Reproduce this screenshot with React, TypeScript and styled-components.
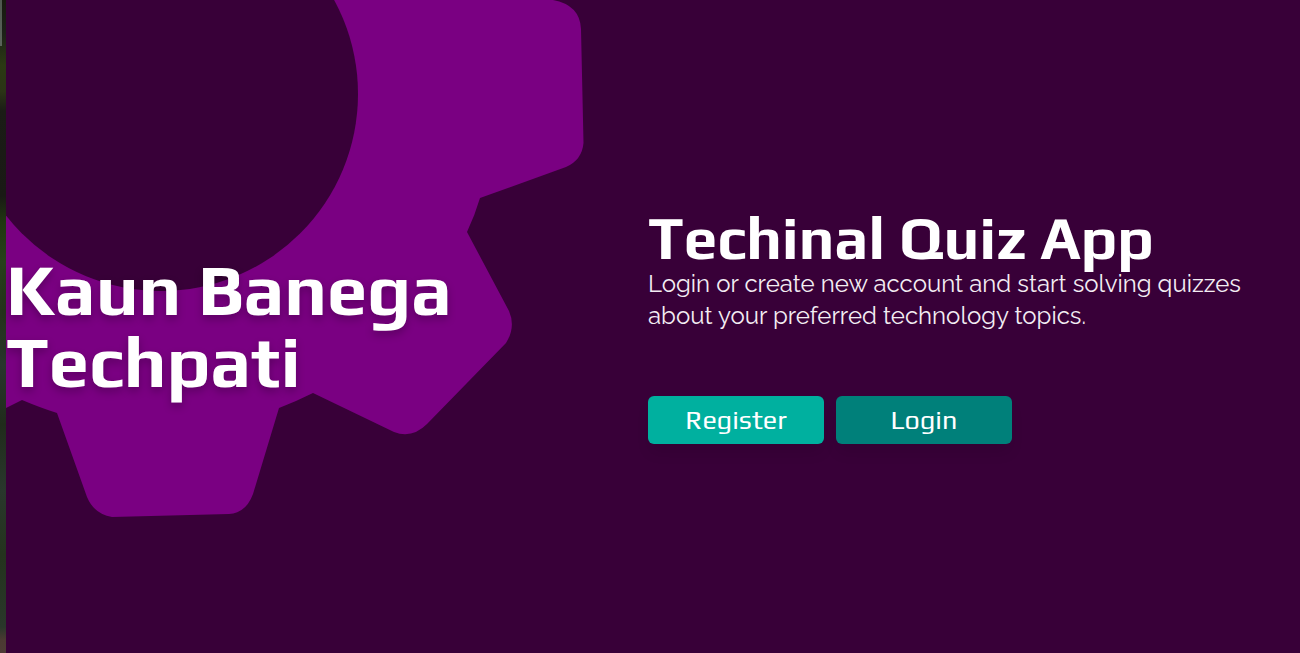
import React from "react";
import styled, { createGlobalStyle } from "styled-components";

const GlobalStyle = createGlobalStyle`
  *, *::before, *::after { box-sizing: border-box; }
  body { margin: 0; background: #380038; }
`;

const headingFont = `Play, Inter, "Liberation Sans", sans-serif`;
const bodyFont = `Raleway, Lato, "Liberation Sans", sans-serif`;

const Page = styled.div`
  display: flex;
  min-height: 100vh;
  overflow: hidden;
  color: #fff;
  background: #380038;
  font-family: ${bodyFont};
`;

const PhotoEdge = styled.div`
  flex: 0 0 6px;
  background:
    linear-gradient(#4f574f, #5a635a) 0 0 / 2px 46px no-repeat,
    linear-gradient(
      to bottom,
      #18190f 0%,
      #1c2018 5%,
      #2b3913 10%,
      #2b3416 14%,
      #1b1c16 17%,
      #191a15 30%,
      #203710 34%,
      #27411a 40%,
      #24331b 48%,
      #29362c 56%,
      #202c1b 65%,
      #29372c 75%,
      #24331d 85%,
      #29372a 96%,
      #4b3a32 98%,
      #4d3b35 100%
    );
`;

const Panel = styled.main`
  position: relative;
  flex: 1;
  display: grid;
  grid-template-columns: 1fr 1fr;
  align-items: center;
  min-width: 0;
  padding: 0 10px 2px 0;
`;

const Gear = styled.svg`
  position: absolute;
  top: 0;
  left: 0;
`;

const Brand = styled.h1`
  position: relative;
  margin: 0;
  font-family: ${headingFont};
  font-size: 72px;
  font-weight: 700;
  line-height: 72px;
  text-shadow: 0 4px 8px rgba(0, 0, 0, 0.25);
`;

const Intro = styled.section`
  position: relative;
  padding-right: 40px;
`;

const Title = styled.h2`
  margin: 0;
  font-family: ${headingFont};
  font-size: 60px;
  font-weight: 700;
  line-height: 60px;
`;

const Lead = styled.p`
  margin: 0;
  font-size: 24px;
  line-height: 32px;
  color: #f3edf3;
`;

const Actions = styled.div`
  display: flex;
  gap: 12px;
  margin-top: 64px;
`;

const Button = styled.button<{ $color: string }>`
  width: 176px;
  height: 48px;
  padding: 0;
  border: 0;
  border-radius: 6px;
  background: ${(p) => p.$color};
  color: #fff;
  font-family: ${headingFont};
  font-size: 27px;
  line-height: 32px;
  cursor: pointer;
  box-shadow: 0 10px 15px -3px rgba(0, 0, 0, 0.1);
`;

export default function App() {
  return (
    <>
      <GlobalStyle />
      <Page>
        <PhotoEdge />
        <Panel>
          <Gear width="580" height="520" viewBox="6 0 580 520" aria-hidden="true">
            <path
              fill="#7a0082"
              d="M6 0H553Q580 5 581 29L583.500 143Q582 160 566 167L480 198Q475 215 467 232L509 311Q516 327 506 343L427 424Q412 439 394 432L313 393Q297 401 279 408L253 494Q246 513 229 514L112 517Q94 514 87 497L57 413Q41 408 22 400L6 408Z"
            />
            <circle cx="161" cy="94" r="197" fill="#380038" />
          </Gear>
          <Brand>
            Kaun Banega
            <br />
            Techpati
          </Brand>
          <Intro>
            <Title>Techinal Quiz App</Title>
            <Lead>Login or create new account and start solving quizzes about your preferred technology topics.</Lead>
            <Actions>
              <Button type="button" $color="#00b09f">Register</Button>
              <Button type="button" $color="#00807a">Login</Button>
            </Actions>
          </Intro>
        </Panel>
      </Page>
    </>
  );
}
